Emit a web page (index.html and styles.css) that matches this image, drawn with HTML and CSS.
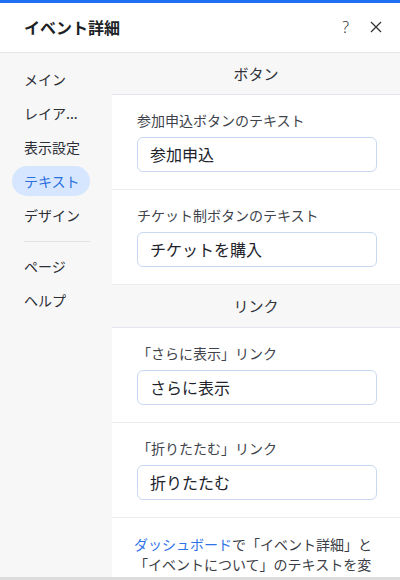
FILE: index.html
```html
<!DOCTYPE html>
<html lang="ja">
<head>
<meta charset="utf-8">
<link rel="stylesheet" href="styles.css">
</head>
<body>
<div class="app">
  <div class="topbar"></div>
  <header class="header">
    <h1 class="title">イベント詳細</h1>
    <div class="actions">
      <span class="help">?</span>
      <svg class="close" width="12" height="12" viewBox="0 0 12 12"><path d="M1 1L11 11M11 1L1 11" stroke="#333" stroke-width="1.3" fill="none"/></svg>
    </div>
  </header>
  <div class="main">
    <nav class="sidebar">
      <div class="item">メイン</div>
      <div class="item">レイア...</div>
      <div class="item">表示設定</div>
      <div class="item active">テキスト</div>
      <div class="item">デザイン</div>
      <div class="divider"></div>
      <div class="item">ページ</div>
      <div class="item">ヘルプ</div>
    </nav>
    <section class="content">
      <div class="sec-title">ボタン</div>
      <div class="field">
        <div class="label">参加申込ボタンのテキスト</div>
        <div class="input">参加申込</div>
      </div>
      <div class="field">
        <div class="label">チケット制ボタンのテキスト</div>
        <div class="input">チケットを購入</div>
      </div>
      <div class="sec-title">リンク</div>
      <div class="field">
        <div class="label">「さらに表示」リンク</div>
        <div class="input">さらに表示</div>
      </div>
      <div class="field">
        <div class="label">「折りたたむ」リンク</div>
        <div class="input">折りたたむ</div>
      </div>
      <p class="note"><span class="link">ダッシュボード</span>で「イベント詳細」と「イベントについて」のテキストを変更しました。</p>
    </section>
  </div>
</div>
</body>
</html>
```
FILE: styles.css
```css
* { box-sizing: border-box; }
html, body { margin: 0; padding: 0; }
body {
  font-family: "Noto Sans CJK JP", "Noto Sans", sans-serif;
  color: #20232b;
  background: #fff;
}
.app {
  width: 400px;
  height: 580px;
  display: flex;
  flex-direction: column;
  overflow: hidden;
}
.topbar {
  height: 3px;
  background: #1f6ff2;
  flex: none;
}
.header {
  height: 50px;
  flex: none;
  display: flex;
  align-items: center;
  justify-content: space-between;
  padding: 0 18px 0 24px;
  border-bottom: 1px solid #e6e6e6;
}
.title {
  margin: 0;
  font-size: 16px;
  font-weight: 700;
  color: #1c1f26;
  line-height: 20px;
  padding-bottom: 2px;
}
.actions {
  display: flex;
  align-items: center;
  gap: 21px;
  padding-bottom: 2px;
}
.help {
  font-family: "Noto Sans", sans-serif;
  font-size: 16px;
  color: #333;
  font-weight: 300;
}
.close { display: block; }
.main {
  flex: 1;
  display: flex;
  min-height: 0;
  overflow: hidden;
  border-bottom: 3px solid #dcdcdc;
}
.sidebar {
  width: 112px;
  flex: none;
  background: #f7f7f7;
  padding: 11px 22px 0 12px;
  display: flex;
  flex-direction: column;
  gap: 4px;
}
.item {
  height: 30px;
  line-height: 30px;
  padding-left: 12px;
  border-radius: 15px;
  font-size: 14px;
  color: #2b2e36;
  white-space: nowrap;
}
.item.active {
  background: #d6e6fe;
  color: #2a6fe0;
}
.divider {
  height: 1px;
  background: #e2e2e2;
  margin: 7px 0 5px 12px;
}
.content {
  flex: 1;
  background: #fff;
  min-width: 0;
}
.sec-title {
  height: 42px;
  line-height: 41px;
  text-align: center;
  font-size: 15px;
  color: #30333a;
  background: #f7f7f7;
  border-bottom: 1px solid #e3e6ee;
}
.field {
  padding: 15px 23px 18px 25px;
  border-bottom: 1px solid #ececec;
  height: 95px;
}
.field + .sec-title {
  height: 43px;
  line-height: 42px;
}
.label {
  font-size: 14px;
  line-height: 20px;
  color: #40434b;
  margin-bottom: 7px;
}
.input {
  height: 35px;
  border: 1px solid #c9d8f2;
  border-radius: 6px;
  padding-left: 12px;
  font-size: 16px;
  line-height: 33px;
  color: #20232b;
}
.note {
  margin: 0;
  padding: 16px 24px 0 22px;
  font-size: 14px;
  line-height: 20px;
  color: #3a3d45;
}
.link { color: #2f73e8; }
```
